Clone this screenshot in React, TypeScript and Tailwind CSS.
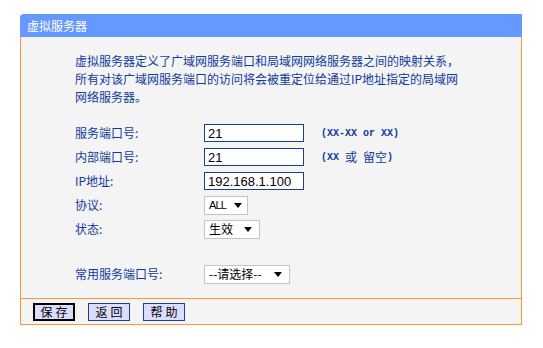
import React from "react";

const cjk = { fontFamily: '"Noto Sans CJK SC", "Noto Sans", sans-serif' };
const mono = { fontFamily: '"Liberation Mono", "Noto Sans CJK SC", monospace' };

function Arrow() {
  return (
    <svg width="8" height="5" viewBox="0 0 8 5" className="block shrink-0">
      <path d="M0 0 H8 L4 5 Z" fill="#000" />
    </svg>
  );
}

function Select({ w, label, narrow }: { w: number; label: string; narrow?: boolean }) {
  return (
    <div
      className={
        "flex h-[19px] items-center justify-between border border-[#c4c4c4] bg-white pl-[4px] text-[12px] leading-none text-black " +
        (narrow ? "pr-[5px]" : "pr-[7px]")
      }
      style={{ width: w }}
    >
      <span
        className={narrow ? "text-[11px] tracking-[-0.8px]" : ""}
        style={narrow ? { fontFamily: '"Liberation Sans", Arial, sans-serif' } : undefined}
      >
        {label}
      </span>
      <Arrow />
    </div>
  );
}

function Input({ value }: { value: string }) {
  return (
    <div
      className="flex h-[18px] w-[100px] items-center border border-[#1d3e9b] bg-white pl-[3px] text-[13px] leading-none text-black"
      style={{ fontFamily: '"Liberation Sans", Arial, sans-serif' }}
    >
      {value}
    </div>
  );
}

function Row({ label, children, hint }: { label: string; children: React.ReactNode; hint?: React.ReactNode }) {
  return (
    <div className="flex h-[24px] items-center">
      <div className="w-[129px] text-[12px] leading-none text-[#10399e]">{label}</div>
      {children}
      {hint && <div className="ml-[17px] flex items-center text-[#10399e]">{hint}</div>}
    </div>
  );
}

function Button({ label, primary }: { label: string; primary?: boolean }) {
  return (
    <div
      className={
        "flex h-[18px] w-[42px] items-center justify-center bg-[#dcdcfc] text-[12px] leading-none tracking-[3px] text-black " +
        (primary ? "border-2 border-black" : "border border-[#1d3e9b]")
      }
    >
      <span className="pl-[3px]">{label}</span>
    </div>
  );
}

export default function App() {
  return (
    <div className="h-[348px] w-[543px] bg-white pl-[20px] pt-[14px]" style={cjk}>
      <div className="w-[502px]">
        <div className="flex h-[23px] items-center rounded-tl-[4px] bg-[#6699ff] pl-[7px] text-[12px] text-white">
          虚拟服务器
        </div>
        <div className="border-x border-b border-[#ff9a33] bg-[#f4f4f4]">
          <div className="pl-[54px] pt-[15px] pb-[12px]">
            <div className="text-[12px] leading-[18px] text-[#10399e]">
              虚拟服务器定义了广域网服务端口和局域网网络服务器之间的映射关系，
              <br />
              所有对该广域网服务端口的访问将会被重定位给通过IP地址指定的局域网
              <br />
              网络服务器。
            </div>
            <div className="mt-[15px]">
              <Row
                label="服务端口号:"
                hint={<span className="text-[10px] font-bold" style={mono}>(XX-XX or XX)</span>}
              >
                <Input value="21" />
              </Row>
              <Row
                label="内部端口号:"
                hint={
                  <span className="flex items-center" style={mono}>
                    <span className="text-[10px] font-bold">(XX&nbsp;</span>
                    <span className="text-[12px]" style={cjk}>或</span>
                    <span className="text-[10px]">&nbsp;</span>
                    <span className="text-[12px]" style={cjk}>留空</span>
                    <span className="text-[10px] font-bold">)</span>
                  </span>
                }
              >
                <Input value="21" />
              </Row>
              <Row label="IP地址:">
                <Input value="192.168.1.100" />
              </Row>
              <Row label="协议:">
                <Select w={44} label="ALL" narrow />
              </Row>
              <Row label="状态:">
                <Select w={56} label="生效" />
              </Row>
              <div className="mt-[21px]">
                <Row label="常用服务端口号:">
                  <Select w={86} label="--请选择--" />
                </Row>
              </div>
            </div>
          </div>
          <div className="flex h-[26px] items-start gap-[13px] border-t border-[#ff9a33] pl-[12px] pt-[4px]">
            <Button label="保存" primary />
            <Button label="返回" />
            <Button label="帮助" />
          </div>
        </div>
      </div>
    </div>
  );
}
